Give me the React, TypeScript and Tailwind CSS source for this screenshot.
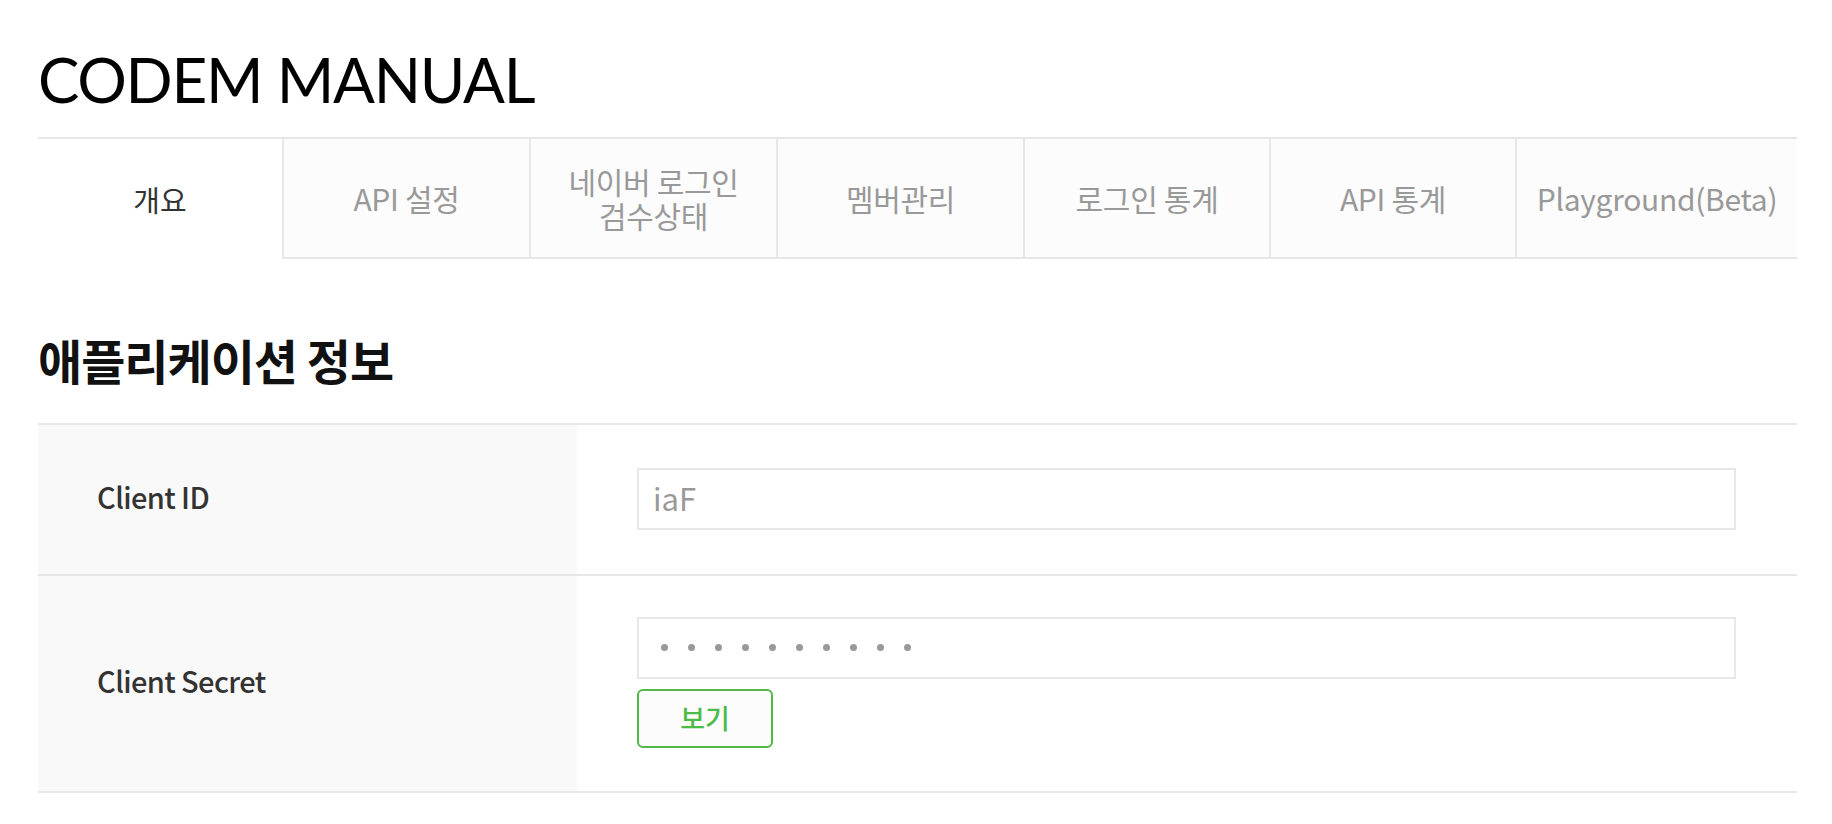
export default function App() {
  const tabs = [
    { label: "개요", active: true, w: "w-[244px]" },
    { label: "API 설정", w: "w-[247px]" },
    { label: "네이버 로그인\n검수상태", w: "w-[247px]" },
    { label: "멤버관리", w: "w-[247px]" },
    { label: "로그인 통계", w: "w-[246px]" },
    { label: "API 통계", w: "w-[246px]" },
    { label: "Playground(Beta)", w: "flex-1" },
  ];

  return (
    <main className="min-h-screen bg-white pl-[38px] pr-[35px] font-['Noto_Sans_CJK_KR',sans-serif] text-[#333]">
      {/* Page title */}
      <h1 className="pt-[48px] pb-[27px] font-['Lato',sans-serif] text-[62px] leading-[62px] font-normal tracking-[-1.3px] text-black">
        CODEM MANUAL
      </h1>

      {/* Tabs */}
      <ul className="flex h-[122px] border-t-2 border-[#e7e7e7]">
        {tabs.map((t) => (
          <li
            key={t.label}
            className={
              t.active
                ? `${t.w} flex items-center justify-center bg-white text-[29px] leading-[34px] text-[#333]`
                : `${t.w} flex items-center justify-center whitespace-pre-line border-b-2 border-l-2 border-[#e7e7e7] bg-[#fcfcfc] text-center text-[30px] leading-[34px] tracking-[-0.3px] text-[#999]`
            }
          >
            {t.label}
          </li>
        ))}
      </ul>

      {/* Application info */}
      <h2 className="pt-[71px] pb-[35px] text-[48px] leading-[58px] font-bold tracking-[-1px] text-[#111]">
        애플리케이션 정보
      </h2>

      <div className="border-t-2 border-[#e7e7e7]">
        <div className="flex h-[151px] border-b-2 border-[#e7e7e7]">
          <div className="flex w-[539px] items-center bg-[#f9f9f9] pb-[5px] pl-[59px] text-[29px] font-medium tracking-[-0.6px] text-[#333]">
            Client ID
          </div>
          <div className="flex flex-1 items-center pb-[2px] pl-[60px] pr-[61px]">
            <div className="flex h-[62px] w-full items-center border-2 border-[#e7e7e7] bg-white pl-[14px] text-[31px] text-[#999]">
              iaF
            </div>
          </div>
        </div>

        <div className="flex h-[217px] border-b-2 border-[#e7e7e7]">
          <div className="flex w-[539px] items-center bg-[#f9f9f9] pb-[5px] pl-[59px] text-[29px] font-medium tracking-[-0.6px] text-[#333]">
            Client Secret
          </div>
          <div className="flex flex-1 flex-col justify-center pb-[3px] pl-[60px] pr-[61px]">
            <div className="flex h-[62px] w-full items-center gap-[20px] border-2 border-[#e7e7e7] bg-white pl-[22px]">
              {Array.from({ length: 10 }).map((_, i) => (
                <span key={i} className="h-[7px] w-[7px] rounded-full bg-[#999]" />
              ))}
            </div>
            <button className="mt-[10px] h-[59px] w-[136px] rounded-[6px] border-2 border-[#52b848] bg-[#fcfcfc] text-[27px] font-medium text-[#4cbb47]">
              보기
            </button>
          </div>
        </div>
      </div>
    </main>
  );
}
